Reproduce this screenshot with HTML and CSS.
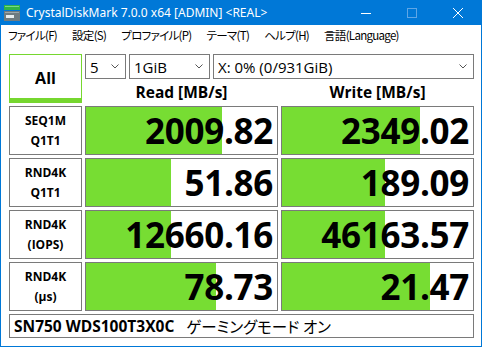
FILE: index.html
```
<!DOCTYPE html>
<html lang="ja">

<head>
    <meta charset="UTF-8">
    <meta name="viewport" content="width=device-width, initial-scale=1.0">
    <title>CrystalDiskMark</title>
    <link rel="stylesheet" href="styles.css">
</head>

<body>
    <div class="janela">
        <div class="barra-titulo">
            <svg class="icone" width="16" height="16" viewBox="0 0 16 16">
                <rect x="0" y="0" width="16" height="5" fill="#2fb34a"/>
                <rect x="1" y="1" width="14" height="1" fill="#7ad88a"/>
                <rect x="0" y="6" width="16" height="10" fill="#6e7b80"/>
                <rect x="1" y="7" width="14" height="1" fill="#9aa6aa"/>
                <rect x="2" y="10" width="8" height="3" fill="#e8eef0"/>
            </svg>
            <span class="titulo">CrystalDiskMark 7.0.0 x64 [ADMIN] &lt;REAL&gt;</span>
            <div class="controles">
                <span class="ctl"><svg width="10" height="10" viewBox="0 0 10 10"><line x1="0" y1="5.5" x2="10" y2="5.5" stroke="#fff" stroke-width="1"/></svg></span>
                <span class="ctl"><svg width="10" height="10" viewBox="0 0 10 10"><rect x="0.5" y="0.5" width="9" height="9" fill="none" stroke="#5fa6e6" stroke-width="1"/></svg></span>
                <span class="ctl"><svg width="10" height="10" viewBox="0 0 10 10"><path d="M0 0 L10 10 M10 0 L0 10" stroke="#fff" stroke-width="1"/></svg></span>
            </div>
        </div>
        <div class="menu">
            <span>ファイル(F)</span>
            <span>設定(S)</span>
            <span>プロファイル(P)</span>
            <span>テーマ(T)</span>
            <span>ヘルプ(H)</span>
            <span>言語(Language)</span>
        </div>

        <main class="conteudo">
            <div class="botao-all">All</div>
            <div class="topo">
                <div class="selecoes">
                    <div class="sel sel-vezes">5<svg viewBox="0 0 8 5"><polyline points="0.5,0.5 4,4 7.5,0.5" fill="none" stroke="#555" stroke-width="1"/></svg></div>
                    <div class="sel sel-tamanho">1GiB<svg viewBox="0 0 8 5"><polyline points="0.5,0.5 4,4 7.5,0.5" fill="none" stroke="#555" stroke-width="1"/></svg></div>
                    <div class="sel sel-drive">X: 0% (0/931GiB)<svg viewBox="0 0 8 5"><polyline points="0.5,0.5 4,4 7.5,0.5" fill="none" stroke="#555" stroke-width="1"/></svg></div>
                </div>
                <div class="cabecalhos">
                    <span>Read [MB/s]</span>
                    <span>Write [MB/s]</span>
                </div>
            </div>

            <div class="rotulo">SEQ1M<br>Q1T1</div>
            <div class="valor"><div class="barra" style="width: 71.2%"></div><span>2009.82</span></div>
            <div class="valor"><div class="barra" style="width: 72.3%"></div><span>2349.02</span></div>

            <div class="rotulo">RND4K<br>Q1T1</div>
            <div class="valor"><div class="barra" style="width: 44.5%"></div><span>51.86</span></div>
            <div class="valor"><div class="barra" style="width: 53.9%"></div><span>189.09</span></div>

            <div class="rotulo">RND4K<br>(IOPS)</div>
            <div class="valor"><div class="barra" style="width: 44.5%"></div><span>12660.16</span></div>
            <div class="valor"><div class="barra" style="width: 53.9%"></div><span>46163.57</span></div>

            <div class="rotulo">RND4K<br>(μs)</div>
            <div class="valor"><div class="barra" style="width: 68%"></div><span>78.73</span></div>
            <div class="valor"><div class="barra" style="width: 77.5%"></div><span>21.47</span></div>

            <div class="nome">SN750 WDS100T3X0C <span class="modo">ゲーミングモード オン</span></div>
        </main>
    </div>
</body>

</html>
```

FILE: styles.css
```
* {
    box-sizing: border-box;
}

body {
    margin: 0;
    background: #fff;
    font-family: "Open Sans", "Noto Sans CJK JP", sans-serif;
}

.janela {
    width: 482px;
    height: 347px;
    border: 1px solid #0078d7;
    border-top: none;
    background: #fff;
    overflow: hidden;
}

.barra-titulo {
    height: 25px;
    background: #0078d7;
    color: #fff;
    display: flex;
    align-items: center;
    padding-left: 3px;
}

.titulo {
    font-family: "Noto Sans", sans-serif;
    font-size: 12px;
    margin-left: 6px;
    flex: 1;
}

.controles {
    display: flex;
    height: 100%;
}

.ctl {
    width: 46px;
    display: flex;
    align-items: center;
    justify-content: center;
}

.menu {
    height: 20px;
    display: flex;
    align-items: center;
    gap: 15px;
    padding-left: 7px;
    font-family: "Noto Sans CJK JP", sans-serif;
    font-feature-settings: "palt";
    font-size: 11.5px;
    letter-spacing: -0.7px;
    color: #000;
}

.conteudo {
    display: grid;
    grid-template-columns: 73px 193px 193px;
    grid-template-rows: 49px 49px 49px 49px 49px 24px;
    gap: 3px;
    padding: 9px 8px 0 8px;
}

.botao-all {
    border: 1px solid #76d72f;
    border-bottom: 5px solid #76d72f;
    display: flex;
    align-items: center;
    justify-content: center;
    font-weight: 700;
    font-size: 16px;
    padding-top: 3px;
}

.topo {
    grid-column: 2 / 4;
    display: flex;
    flex-direction: column;
}

.selecoes {
    display: flex;
    gap: 3px;
    height: 26px;
}

.sel {
    border: 1px solid #7a7a7a;
    background: #fff;
    font-size: 15px;
    display: flex;
    align-items: center;
    justify-content: space-between;
    padding: 0 6px 0 4px;
}

.sel svg {
    width: 8px;
    height: 5px;
}

.sel-vezes {
    width: 41px;
}

.sel-tamanho {
    width: 81px;
}

.sel-drive {
    flex: 1;
}

.cabecalhos {
    flex: 1;
    display: grid;
    grid-template-columns: 193px 193px;
    gap: 3px;
    align-items: center;
    text-align: center;
    font-weight: 700;
    font-size: 15.5px;
    padding-top: 2px;
}

.rotulo {
    border: 1px solid #7a7a7a;
    display: flex;
    align-items: center;
    justify-content: center;
    text-align: center;
    font-weight: 700;
    font-size: 12px;
    line-height: 20px;
}

.valor {
    border: 1px solid #7a7a7a;
    position: relative;
    display: flex;
    align-items: center;
    justify-content: flex-end;
    padding-right: 4px;
}

.barra {
    position: absolute;
    left: 0;
    top: 0;
    bottom: 0;
    background: #77dd33;
}

.valor span {
    position: relative;
    font-weight: 700;
    font-size: 35px;
    line-height: 1;
    letter-spacing: -0.3px;
}

.nome {
    grid-column: 1 / 4;
    border: 1px solid #7a7a7a;
    display: flex;
    align-items: center;
    padding-left: 4px;
    font-weight: 700;
    font-size: 15.5px;
    white-space: pre;
}

.modo {
    font-family: "Noto Sans CJK JP", sans-serif;
    font-weight: 400;
    font-feature-settings: "palt";
    margin-left: 8px;
}
```
